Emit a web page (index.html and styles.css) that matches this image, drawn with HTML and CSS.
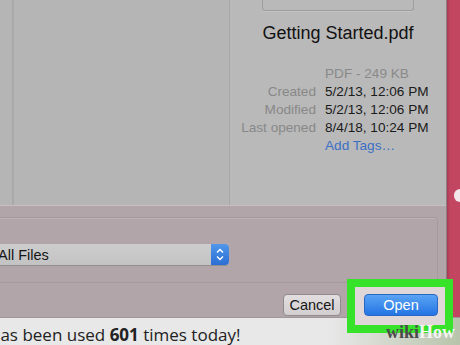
FILE: index.html
```html
<!DOCTYPE html>
<html lang="en">

<head>
  <meta charset="UTF-8">
  <meta name="viewport" content="width=device-width, initial-scale=1.0">
  <title>Open File</title>
  <link rel="stylesheet" href="styles.css">
</head>

<body>
  <div class="screen">
    <div class="top">
      <div class="dialog">
        <div class="panes">
          <div class="sidebar"></div>
          <div class="list"></div>
          <div class="preview">
            <div class="thumb"></div>
            <div class="filename">Getting Started.pdf</div>
            <div class="meta">
              <span class="label"></span><span class="value kind">PDF - 249 KB</span>
              <span class="label">Created</span><span class="value">5/2/13, 12:06 PM</span>
              <span class="label">Modified</span><span class="value">5/2/13, 12:06 PM</span>
              <span class="label">Last opened</span><span class="value">8/4/18, 10:24 PM</span>
              <span class="label"></span><span class="value tags">Add Tags…</span>
            </div>
          </div>
        </div>
        <div class="options">
          <div class="accessory">
            <div class="popup">
              <span class="popup-text">All Files</span>
              <span class="stepper">
                <svg width="18" height="21" viewBox="0 0 18 21">
                  <path d="M6 8.5 L9 5.5 L12 8.5" fill="none" stroke="#fff" stroke-width="1.4" />
                  <path d="M6 12.5 L9 15.5 L12 12.5" fill="none" stroke="#fff" stroke-width="1.4" />
                </svg>
              </span>
            </div>
          </div>
          <div class="buttons">
            <button class="btn cancel">Cancel</button>
            <button class="btn open">Open</button>
          </div>
        </div>
      </div>
      <div class="app-edge">
        <div class="edge-mark"></div>
      </div>
    </div>
    <div class="footer">has been used <b>601</b> times today!</div>
    <div class="highlight"></div>
    <div class="watermark">wiki<span>How</span></div>
  </div>
</body>

</html>
```

FILE: styles.css
```css
body {
  margin: 0;
  font-family: "Liberation Sans", Arial, sans-serif;
  background: #b4b4b4;
}

.screen {
  position: relative;
  width: 460px;
  height: 345px;
  overflow: hidden;
  display: flex;
  flex-direction: column;
}

.top {
  display: flex;
  height: 326px;
}

.dialog {
  width: 446px;
  display: flex;
  flex-direction: column;
  border-right: 1px solid #8e7f84;
}

/* file browser panes */
.panes {
  display: flex;
  height: 205px;
  border-bottom: 1px solid #c6bfc1;
}

.sidebar {
  width: 12px;
  background: #b5b5b5;
  border-right: 2px solid #a9a9a9;
}

.list {
  width: 215px;
  background: #b5b5b5;
  border-right: 1px solid #a6a6a6;
}

.preview {
  flex: 1;
  background: #b9b9b9;
  display: flex;
  flex-direction: column;
  align-items: center;
}

.thumb {
  width: 152px;
  height: 11px;
  box-sizing: border-box;
  border: 1px solid #9e9e9e;
  border-top: none;
  border-radius: 0 0 3px 3px;
  box-shadow: 0 1px 0 #c4c4c4;
}

.filename {
  margin-top: 12px;
  font-size: 18px;
  line-height: 21px;
  color: #111;
}

.meta {
  align-self: stretch;
  margin-top: 21px;
  display: grid;
  grid-template-columns: 86px auto;
  column-gap: 9px;
  font-size: 13.6px;
  line-height: 18px;
}

.label {
  text-align: right;
  color: #888;
}

.value {
  color: #1b1b1b;
}

.kind {
  color: #8a8a8a;
}

.tags {
  color: #3b6fc6;
}

/* bottom bar */
.options {
  flex: 1;
  background: #b2a5a9;
  display: flex;
  flex-direction: column;
}

.accessory {
  margin: 11px 0 0 -30px;
  width: 468px;
  height: 66px;
  box-sizing: border-box;
  border: 1px solid #a79a9e;
  border-radius: 4px;
  box-shadow: inset 0 1px 0 #bdb1b5;
  padding-top: 26px;
}

.popup {
  width: 258px;
  height: 21px;
  display: flex;
  align-items: center;
  background: linear-gradient(#cdcdcd, #c3c3c3);
  border-bottom: 1px solid #8f8f8f;
  border-radius: 0 4px 4px 0;
}

.popup-text {
  flex: 1;
  padding-left: 27px;
  font-size: 14.5px;
  color: #151515;
}

.stepper {
  width: 18px;
  height: 21px;
  display: flex;
  background: linear-gradient(#5197ea, #2b6ed4);
  border-radius: 0 4px 4px 0;
}

.buttons {
  display: flex;
  justify-content: flex-end;
  gap: 23px;
  margin-top: 11px;
  padding-right: 8px;
}

.btn {
  height: 22px;
  padding: 0;
  font-family: "Liberation Sans", Arial, sans-serif;
  font-size: 14.5px;
  border-radius: 4px;
}

.cancel {
  width: 58px;
  color: #151515;
  background: linear-gradient(#e2dedf, #d3cfd0);
  border: 1px solid #8f8a8c;
}

.open {
  position: relative;
  z-index: 2;
  width: 74px;
  color: #fff;
  background: linear-gradient(#5aa4f4, #2474e4);
  border: 1px solid #2a66c4;
}

/* the app behind the dialog */
.app-edge {
  flex: 1;
  background: linear-gradient(to right, #a83a52, #c2465f 3px);
  padding: 189px 0 0 7px;
}

.edge-mark {
  width: 6px;
  height: 13px;
  background: #f2e6ea;
  border-radius: 6px 0 0 6px;
}

.footer {
  flex: 1;
  padding-top: 7px;
  border-top: 1px solid #9e9699;
  background: linear-gradient(to right, #e8e8e8 72%, #b8c4ab);
  font-family: "Open Sans", "Liberation Sans", sans-serif;
  font-size: 17px;
  line-height: 20px;
  color: #222;
  white-space: nowrap;
  margin-left: -10px;
}

/* tutorial overlays */
.highlight {
  position: absolute;
  left: 347px;
  top: 279px;
  width: 106px;
  height: 54px;
  box-sizing: border-box;
  border: 8px solid #36e22a;
  background: #e0d7d9;
  z-index: 1;
}

.watermark {
  position: absolute;
  right: 5px;
  bottom: 4px;
  z-index: 3;
  font-family: "Liberation Serif", serif;
  font-weight: bold;
  font-size: 18px;
  line-height: 18px;
  color: #4a4a4a;
}

.watermark span {
  color: #f4f4f4;
}
```
